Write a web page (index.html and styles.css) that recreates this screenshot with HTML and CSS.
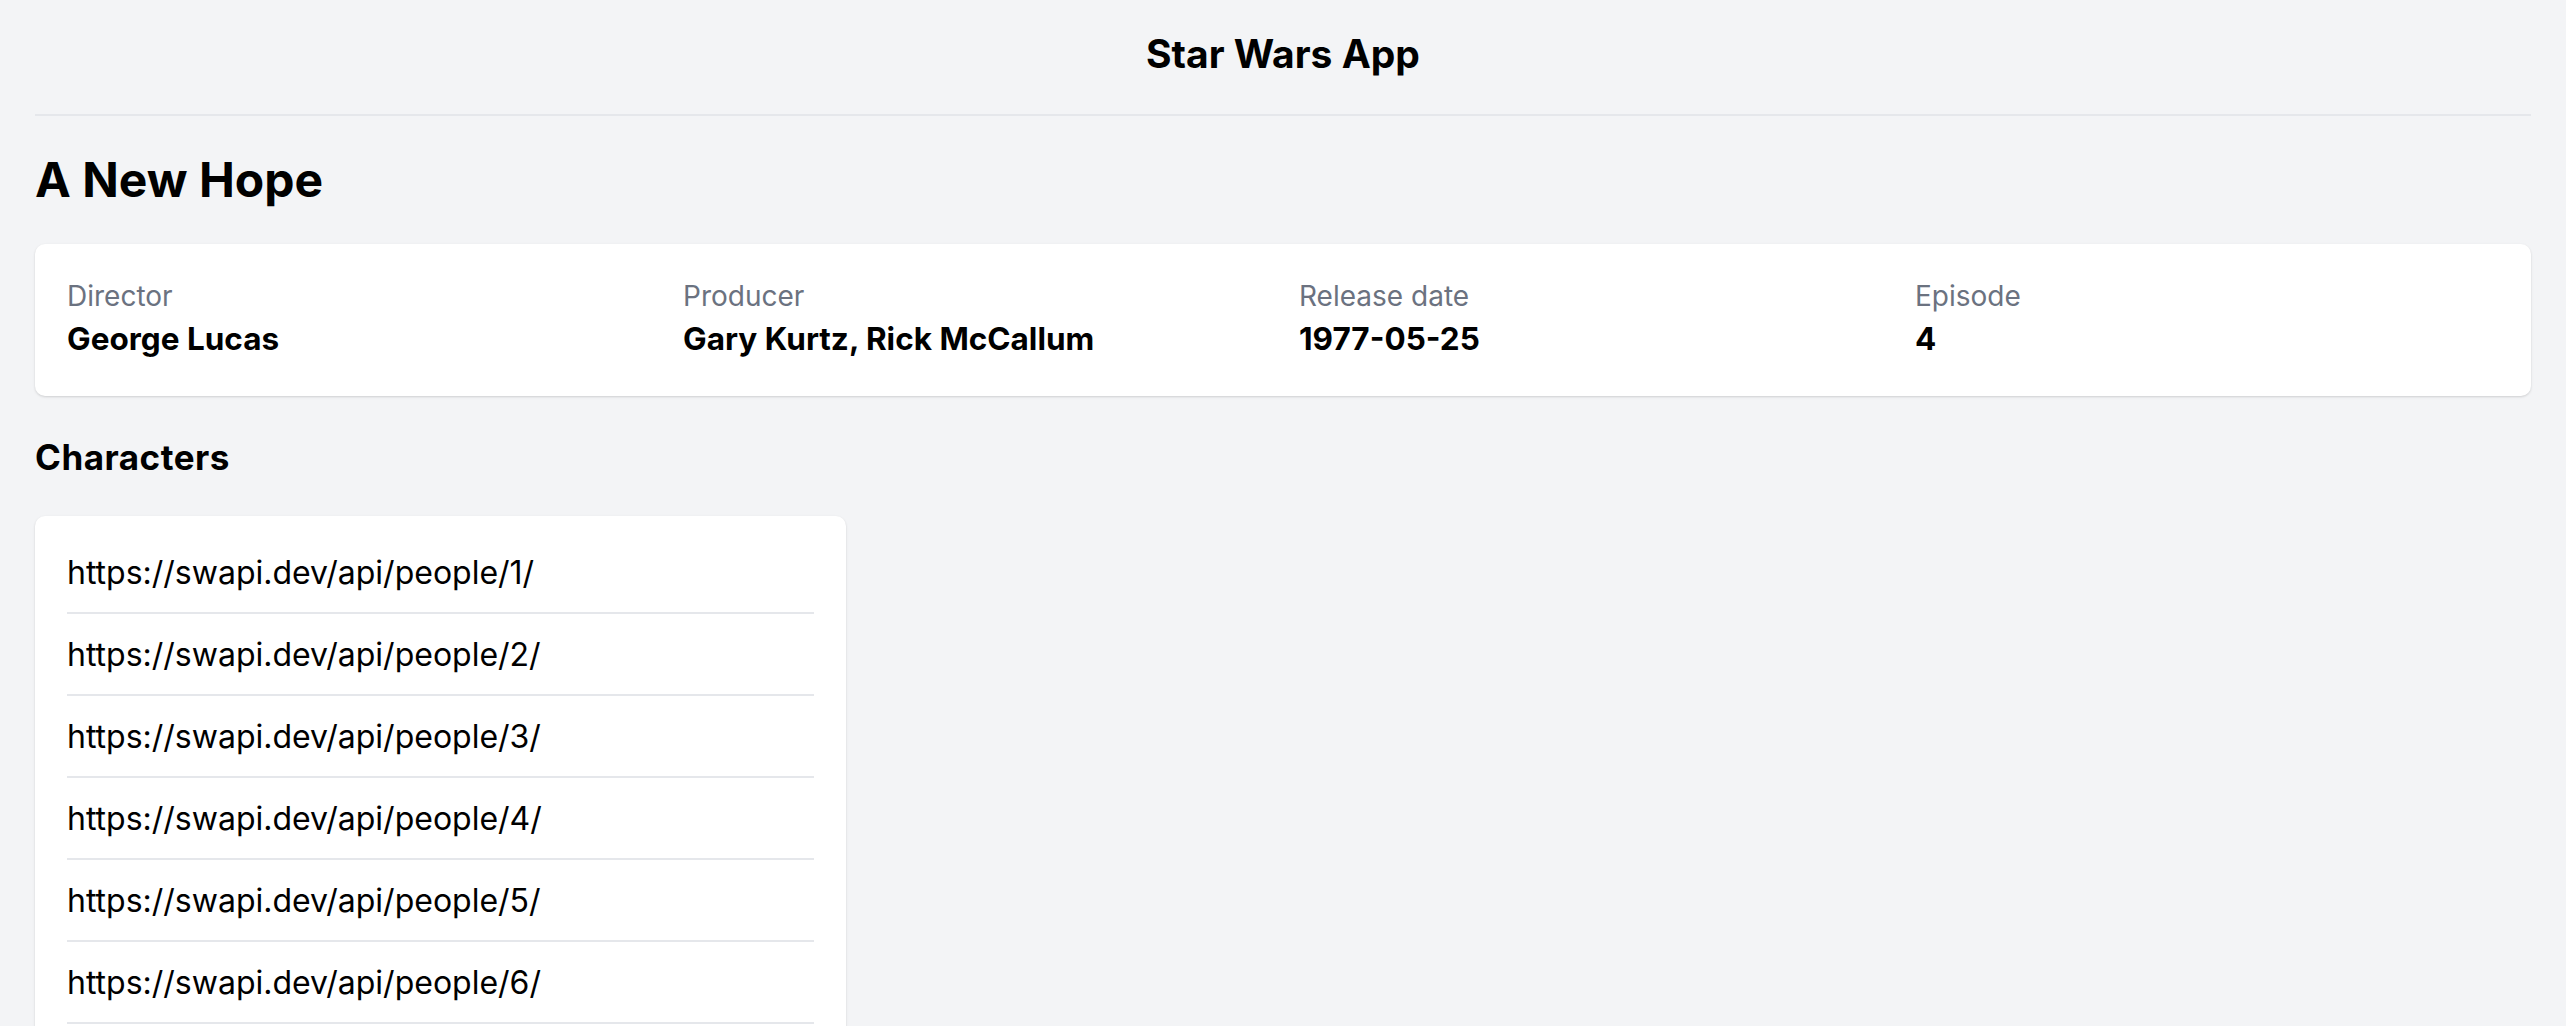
FILE: index.html
```html
<!DOCTYPE html>
<html lang="en">
<head>
<meta charset="utf-8">
<title>Star Wars App</title>
<link rel="stylesheet" href="styles.css">
</head>
<body>
<div class="page">
  <header class="app-header">
    <div class="app-title">Star Wars App</div>
  </header>
  <main class="film">
    <h1 class="film-title">A New Hope</h1>
    <section class="info-card">
      <div class="info-item">
        <div class="info-label">Director</div>
        <div class="info-value">George Lucas</div>
      </div>
      <div class="info-item">
        <div class="info-label">Producer</div>
        <div class="info-value">Gary Kurtz, Rick McCallum</div>
      </div>
      <div class="info-item">
        <div class="info-label">Release date</div>
        <div class="info-value">1977-05-25</div>
      </div>
      <div class="info-item">
        <div class="info-label">Episode</div>
        <div class="info-value">4</div>
      </div>
    </section>
    <h2 class="section-title">Characters</h2>
    <ul class="char-list">
      <li class="char-item">https://swapi.dev/api/people/1/</li>
      <li class="char-item">https://swapi.dev/api/people/2/</li>
      <li class="char-item">https://swapi.dev/api/people/3/</li>
      <li class="char-item">https://swapi.dev/api/people/4/</li>
      <li class="char-item">https://swapi.dev/api/people/5/</li>
      <li class="char-item">https://swapi.dev/api/people/6/</li>
    </ul>
  </main>
</div>
</body>
</html>
```
FILE: styles.css
```css
* { box-sizing: border-box; }
html, body { margin: 0; padding: 0; }
body {
  background: #f3f4f6;
  color: #000;
  font-family: Inter, "Noto Sans", sans-serif;
}
.page { padding: 0 35px; }
.app-header {
  padding: 30px 0 36px;
  border-bottom: 2px solid #e5e7eb;
  text-align: center;
}
.app-title {
  font-size: 39px;
  line-height: 48px;
  font-weight: 700;
}
.film-title {
  margin: 36px 0 36px;
  font-size: 48px;
  line-height: 56px;
  font-weight: 700;
}
.info-card {
  background: #fff;
  border-radius: 10px;
  box-shadow: 0 1px 3px rgba(0,0,0,0.1), 0 1px 2px rgba(0,0,0,0.06);
  padding: 33px 32px 34px;
  display: grid;
  grid-template-columns: repeat(4, 1fr);
  column-gap: 32px;
}
.info-label {
  color: #6b7280;
  font-size: 28px;
  line-height: 38px;
}
.info-value {
  margin-top: 2px;
  font-size: 31.5px;
  line-height: 44.8px;
  font-weight: 700;
}
.section-title {
  margin: 41px 0 39px;
  font-size: 35px;
  line-height: 40px;
  font-weight: 700;
  letter-spacing: 0.5px;
}
.char-list {
  list-style: none;
  margin: 0;
  width: 811px;
  padding: 16px 32px;
  background: #fff;
  border-radius: 10px;
  box-shadow: 0 1px 3px rgba(0,0,0,0.1), 0 1px 2px rgba(0,0,0,0.06);
}
.char-item {
  padding: 21px 0 19px;
  font-size: 32px;
  line-height: 40px;
  border-bottom: 2px solid #e5e7eb;
}
```
